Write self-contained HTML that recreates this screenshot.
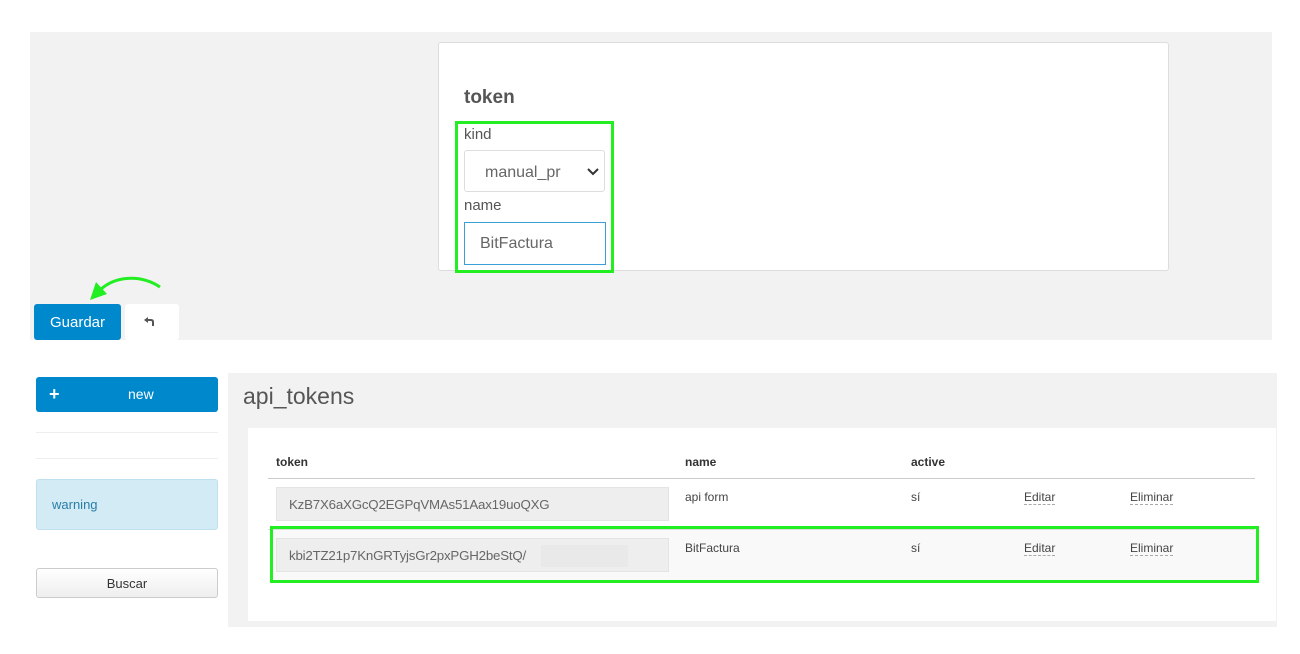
<!DOCTYPE html>
<html><head><meta charset="utf-8"><style>
*{box-sizing:border-box;margin:0;padding:0}
body{width:1300px;height:654px;background:#fff;font-family:"Liberation Sans",sans-serif;position:relative;overflow:hidden;color:#555}
.a{position:absolute}
.tk{font-size:13.3px;letter-spacing:-0.2px}
</style></head><body>
<div class="a" style="left:30px;top:32px;width:1242px;height:308px;background:#f2f2f2"></div>
<div class="a" style="left:438px;top:42px;width:731px;height:229px;background:#fff;border:1px solid #ddd;border-radius:3px"></div>
<div class="a" style="left:464px;top:87px;font-size:19px;font-weight:bold;color:#555">token</div>
<div class="a" style="left:464px;top:126px;font-size:15px;color:#555">kind</div>
<div class="a" style="left:464px;top:150px;width:141px;height:42px;border:1px solid #ddd;border-radius:3px;background:#fff"></div>
<div class="a" style="left:485px;top:164px;font-size:16px;color:#666">manual_pr</div>
<svg class="a" style="left:586px;top:166px" width="14" height="12"><path d="M2 3l5 5 5-5" stroke="#333" stroke-width="2" fill="none"/></svg>
<div class="a" style="left:464px;top:197px;font-size:15px;color:#555">name</div>
<div class="a" style="left:464px;top:222px;width:142px;height:43px;border:1px solid #3ba0d8;background:#fff"></div>
<div class="a" style="left:480px;top:235px;font-size:16px;color:#666">BitFactura</div>
<div class="a" style="left:455px;top:121px;width:159px;height:152px;border:3px solid #22ee22"></div>
<svg class="a" style="left:85px;top:272px" width="80" height="34"><path d="M75 15C55 2 30 4 15 18" stroke="#22ee22" stroke-width="3" fill="none"/><path d="M5 28L11 10L22 22Z" fill="#22ee22"/></svg>
<div class="a" style="left:34px;top:304px;width:87px;height:36px;background:#0088cc;border-radius:3px;color:#fff;font-size:15px;text-align:center;line-height:38px">Guardar</div>
<div class="a" style="left:125px;top:304px;width:54px;height:36px;background:#fff;border-radius:3px"></div>
<svg class="a" style="left:142px;top:316px" width="14" height="12"><path d="M2 4L6 1V7Z" fill="#555"/><path d="M5 4H9Q11 4 11 6V10" stroke="#555" stroke-width="2" fill="none"/></svg>

<div class="a" style="left:32px;top:373px;width:1245px;height:254px;background:#f2f2f2"></div>
<div class="a" style="left:32px;top:373px;width:196px;height:254px;background:#fff"></div>
<div class="a" style="left:36px;top:377px;width:182px;height:35px;background:#0088cc;border-radius:3px;color:#fff;font-size:14px;line-height:35px"><span style="position:absolute;left:13px;font-weight:bold;font-size:18px">+</span><span style="position:absolute;left:92px">new</span></div>
<div class="a" style="left:36px;top:432px;width:182px;height:1px;background:#eee"></div>
<div class="a" style="left:36px;top:458px;width:182px;height:1px;background:#eee"></div>
<div class="a" style="left:36px;top:479px;width:182px;height:51px;background:#d2ebf5;border:1px solid #bfe0ef;border-radius:3px;color:#2a7ea8;font-size:13px;line-height:49px;padding-left:15px">warning</div>
<div class="a" style="left:36px;top:568px;width:182px;height:30px;background:linear-gradient(#fff,#eee);border:1px solid #ccc;border-radius:3px;color:#333;font-size:13px;text-align:center;line-height:29px">Buscar</div>
<div class="a" style="left:243px;top:383px;font-size:23px;color:#555">api_tokens</div>
<div class="a" style="left:248px;top:428px;width:1028px;height:193px;background:#fff"></div>
<div class="a" style="left:276px;top:455px;font-size:12px;font-weight:bold;color:#333">token</div>
<div class="a" style="left:685px;top:455px;font-size:12px;font-weight:bold;color:#333">name</div>
<div class="a" style="left:911px;top:455px;font-size:12px;font-weight:bold;color:#333">active</div>
<div class="a" style="left:268px;top:478px;width:987px;height:1px;background:#ccc"></div>
<div class="a tk" style="left:276px;top:487px;width:393px;height:34px;background:#eee;border:1px solid #e4e4e4;color:#666;line-height:33px;padding-left:12px">KzB7X6aXGcQ2EGPqVMAs51Aax19uoQXG</div>
<div class="a" style="left:685px;top:490px;font-size:12px;color:#444">api form</div>
<div class="a" style="left:911px;top:490px;font-size:12px;color:#444">sí</div>
<div class="a" style="left:1024px;top:490px;font-size:12px;color:#444;border-bottom:1px dashed #aaa">Editar</div>
<div class="a" style="left:1130px;top:490px;font-size:12px;color:#444;border-bottom:1px dashed #aaa">Eliminar</div>
<div class="a" style="left:268px;top:529px;width:987px;height:1px;background:#ddd"></div>
<div class="a" style="left:272px;top:530px;width:985px;height:50px;background:#f9f9f9"></div>
<div class="a tk" style="left:276px;top:538px;width:393px;height:34px;background:#eee;border:1px solid #e4e4e4;color:#666;line-height:33px;padding-left:12px">kbi2TZ21p7KnGRTyjsGr2pxPGH2beStQ/</div>
<div class="a" style="left:541px;top:545px;width:87px;height:22px;background:#e9e9e9"></div>
<div class="a" style="left:685px;top:541px;font-size:12px;color:#444">BitFactura</div>
<div class="a" style="left:911px;top:541px;font-size:12px;color:#444">sí</div>
<div class="a" style="left:1024px;top:541px;font-size:12px;color:#444;border-bottom:1px dashed #aaa">Editar</div>
<div class="a" style="left:1130px;top:541px;font-size:12px;color:#444;border-bottom:1px dashed #aaa">Eliminar</div>
<div class="a" style="left:270px;top:526px;width:989px;height:57px;border:3px solid #22ee22"></div>
</body></html>
